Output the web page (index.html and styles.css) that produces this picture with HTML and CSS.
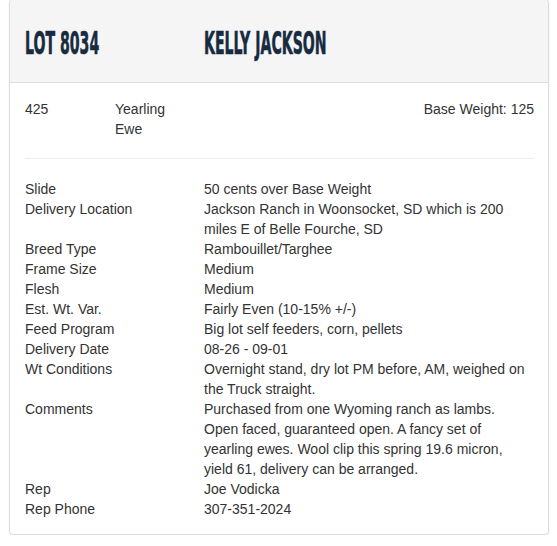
FILE: index.html
```html
<!DOCTYPE html>
<html>
<head>
<meta charset="utf-8">
<link rel="stylesheet" href="styles.css">
</head>
<body>
<div class="panel">
  <div class="panel-heading">
    <h2 class="lot">LOT 8034</h2>
    <h2 class="name">KELLY JACKSON</h2>
  </div>
  <div class="panel-body">
    <div class="top-row">
      <div class="qty">425</div>
      <div class="kind">Yearling Ewe</div>
      <div class="base">Base Weight: 125</div>
    </div>
    <hr class="sep">
    <dl class="details">
      <dt>Slide</dt><dd>50 cents over Base Weight</dd>
      <dt>Delivery Location</dt><dd>Jackson Ranch in Woonsocket, SD which is 200 miles E of Belle Fourche, SD</dd>
      <dt>Breed Type</dt><dd>Rambouillet/Targhee</dd>
      <dt>Frame Size</dt><dd>Medium</dd>
      <dt>Flesh</dt><dd>Medium</dd>
      <dt>Est. Wt. Var.</dt><dd>Fairly Even (10-15% +/-)</dd>
      <dt>Feed Program</dt><dd>Big lot self feeders, corn, pellets</dd>
      <dt>Delivery Date</dt><dd>08-26 - 09-01</dd>
      <dt>Wt Conditions</dt><dd>Overnight stand, dry lot PM before, AM, weighed on the Truck straight.</dd>
      <dt>Comments</dt><dd>Purchased from one Wyoming ranch as lambs. Open faced, guaranteed open. A fancy set of yearling ewes. Wool clip this spring 19.6 micron, yield 61, delivery can be arranged.</dd>
      <dt>Rep</dt><dd>Joe Vodicka</dd>
      <dt>Rep Phone</dt><dd>307-351-2024</dd>
    </dl>
  </div>
</div>
</body>
</html>
```
FILE: styles.css
```css
html, body {
  margin: 0;
  padding: 0;
  background: #fff;
}
body {
  font-family: "Liberation Sans", Arial, sans-serif;
  font-size: 14px;
  line-height: 20px;
  color: #333;
}
.panel {
  margin: -1px 8px 0 9px;
  border: 1px solid #ddd;
  border-radius: 4px;
  box-shadow: 0 1px 2px rgba(0,0,0,0.08);
  background: #fff;
}
.panel-heading {
  background: #f5f5f5;
  border-bottom: 1px solid #ddd;
  height: 83px;
  display: flex;
  align-items: center;
  padding: 0 15px;
  box-sizing: border-box;
  border-radius: 3px 3px 0 0;
}
.panel-heading h2 {
  margin: 0;
  font-family: "DejaVu Sans", sans-serif;
  font-stretch: condensed;
  font-weight: bold;
  font-size: 32px;
  line-height: 34px;
  color: #172b40;
  transform: scaleX(0.49);
  transform-origin: left center;
  white-space: nowrap;
  padding-top: 4px;
  -webkit-text-stroke: 0.6px #172b40;
}
.panel-heading .lot {
  width: 179px;
  flex: none;
}
.panel-body {
  padding: 16px 14px 15px 15px;
}
.top-row {
  display: flex;
}
.qty {
  width: 90px;
  flex: none;
}
.kind {
  width: 70px;
  flex: none;
}
.base {
  flex: 1;
  text-align: right;
}
.sep {
  border: 0;
  border-top: 1px solid #eee;
  margin: 19px 0 20px;
}
.details {
  display: grid;
  grid-template-columns: 179px 1fr;
  margin: 0;
}
.details dt {
  font-weight: normal;
}
.details dd {
  margin: 0;
  padding-right: 6px;
}
```
